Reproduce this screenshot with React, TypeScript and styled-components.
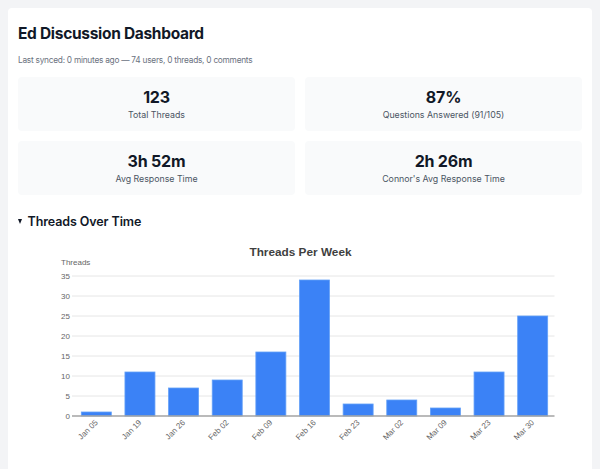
import React from "react";
import styled, { createGlobalStyle } from "styled-components";

const GlobalStyle = createGlobalStyle`
  body {
    margin: 8px;
    background: #f3f4f6;
    font-family: Inter, "Noto Sans", sans-serif;
    color: #111827;
  }
`;

const Card = styled.div`
  background: #ffffff;
  border-radius: 4px;
  padding: 10px 10px 40px;
`;

const Title = styled.h1`
  margin: 6px 0 0;
  font-size: 15.5px;
  line-height: 20px;
  font-weight: 700;
  letter-spacing: -0.3px;
  color: #111827;
`;

const Subtitle = styled.p`
  margin: 10px 0 11px;
  font-size: 8.3px;
  line-height: 12px;
  letter-spacing: -0.25px;
  color: #6b7280;
`;

const StatsGrid = styled.div`
  display: grid;
  grid-template-columns: 1fr 1fr;
  column-gap: 10px;
  row-gap: 10px;
`;

const StatCard = styled.div`
  background: #f9fafb;
  border-radius: 4px;
  padding: 10.5px 10px 11px;
  text-align: center;
`;

const StatValue = styled.div`
  font-size: 16px;
  line-height: 19px;
  font-weight: 700;
  letter-spacing: -0.2px;
  color: #111827;
`;

const StatLabel = styled.div`
  margin-top: 2.6px;
  font-size: 8.8px;
  line-height: 11px;
  color: #4b5563;
`;

const SectionHeading = styled.div`
  margin-top: 18.5px;
  display: flex;
  align-items: center;
  gap: 5.5px;
  font-size: 12.5px;
  line-height: 16px;
  font-weight: 600;
  letter-spacing: -0.1px;
  color: #111827;
`;

const Caret = styled.span`
  width: 0;
  height: 0;
  border-left: 2.7px solid transparent;
  border-right: 2.7px solid transparent;
  border-top: 5.5px solid #111827;
`;

const ChartSvg = styled.svg`
  display: block;
  margin-top: 7.6px;
  width: 564px;
  height: 224px;
  font-family: "Liberation Sans", Arial, sans-serif;
`;

const stats = [
  { value: "123", label: "Total Threads" },
  { value: "87%", label: "Questions Answered (91/105)" },
  { value: "3h 52m", label: "Avg Response Time" },
  { value: "2h 26m", label: "Connor's Avg Response Time" },
];

const weeks = [
  { label: "Jan 05", count: 1 },
  { label: "Jan 19", count: 11 },
  { label: "Jan 26", count: 7 },
  { label: "Feb 02", count: 9 },
  { label: "Feb 09", count: 16 },
  { label: "Feb 16", count: 34 },
  { label: "Feb 23", count: 3 },
  { label: "Mar 02", count: 4 },
  { label: "Mar 09", count: 2 },
  { label: "Mar 23", count: 11 },
  { label: "Mar 30", count: 25 },
];

// plot area, in page coordinates (the svg viewBox starts at 18,238)
const left = 74.5;
const right = 554.5;
const baseY = 417;
const unit = 4;

const ThreadsChart = () => {
  const step = (right - left) / weeks.length;
  const barW = 30;
  const ticks = [0, 5, 10, 15, 20, 25, 30, 35];

  return (
    <ChartSvg viewBox="18 238 564 224">
      <text x={300.5} y={256.5} textAnchor="middle" fontSize={11.8} fontWeight={700} fill="#3f3f3f">
        Threads Per Week
      </text>
      <text x={61} y={265.7} fontSize={8} fill="#666">
        Threads
      </text>
      {ticks.map((t) => {
        const y = baseY - t * unit;
        return (
          <g key={t}>
            {t > 0 && <line x1={72} x2={right} y1={y} y2={y} stroke="#e6e6e6" strokeWidth={1} />}
            <text x={70} y={y + 3} textAnchor="end" fontSize={8} fill="#666">
              {t}
            </text>
          </g>
        );
      })}
      {weeks.map((w, i) => {
        const cx = left + step * (i + 0.5);
        const h = w.count * unit;
        return (
          <g key={w.label}>
            <rect
              x={cx - barW / 2}
              y={baseY - h}
              width={barW}
              height={h}
              fill="#3b82f6"
              stroke="#63a0f8"
              strokeWidth={0.8}
            />
            <text
              x={cx + 2}
              y={424}
              textAnchor="end"
              fontSize={8}
              fill="#666"
              transform={`rotate(-45 ${cx + 2} 424)`}
            >
              {w.label}
            </text>
          </g>
        );
      })}
      <line x1={72} x2={right} y1={baseY} y2={baseY} stroke="#a3a3a3" strokeWidth={1.4} />
    </ChartSvg>
  );
};

const App = () => {
  return (
    <>
      <GlobalStyle />
      <Card>
        <Title>Ed Discussion Dashboard</Title>
        <Subtitle>Last synced: 0 minutes ago — 74 users, 0 threads, 0 comments</Subtitle>
        <StatsGrid>
          {stats.map((s) => (
            <StatCard key={s.label}>
              <StatValue>{s.value}</StatValue>
              <StatLabel>{s.label}</StatLabel>
            </StatCard>
          ))}
        </StatsGrid>
        <SectionHeading>
          <Caret />
          Threads Over Time
        </SectionHeading>
        <ThreadsChart />
      </Card>
    </>
  );
};

export default App;
